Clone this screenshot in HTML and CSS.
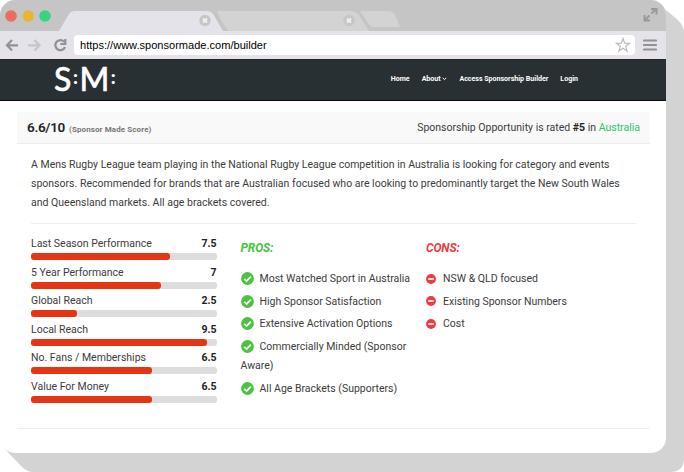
FILE: index.html
```html
<!DOCTYPE html>
<html lang="en">
<head>
<meta charset="utf-8">
<title>Sponsor Made</title>
<link rel="stylesheet" href="styles.css">
</head>
<body>
<div class="scene">
  <svg class="depth" width="684" height="472" viewBox="0 0 684 472" aria-hidden="true"><path d="M655 1L678 20Q684 26 684 33V458Q684 472 670 472H33Q27 472 22 467L3 447Z" fill="#d3d3d3"/></svg>
  <div class="window">
    <header class="tabs">
      <svg width="666" height="31" viewBox="0 0 666 31" aria-hidden="true">
        <path d="M217 11H350Q356 11 359 15L369 31H225Z" fill="#d3d3d3"/>
        <path d="M360 11H388Q393 11 395 15L400 27H374Q370 27 368 23Z" fill="#d3d3d3"/>
        <path d="M210 11Q215 11 218 15L228 31H222L207 11Z" fill="#c5c5c5"/>
        <path d="M59 31L69 14Q71 11 75 11H207Q211 11 213 14L223 31Z" fill="#e3e3e9"/>
        <circle cx="11" cy="16" r="5.8" fill="#ed6b61"/>
        <circle cx="28.300" cy="16" r="5.800" fill="#e8b634"/>
        <circle cx="45" cy="16" r="5.800" fill="#3dd183"/>
        <g fill="#c6c6c6"><circle cx="205" cy="20.500" r="5.700"/><circle cx="349" cy="20.500" r="5.700"/></g>
        <path d="M203 18.500l4 4m0-4l-4 4" stroke="#f1f1f4" stroke-width="2"/>
        <path d="M347 18.500l4 4m0-4l-4 4" stroke="#f1f1f4" stroke-width="2"/>
        <path d="M651.500 13.500l4.500-4.500M651 9h5.500v5.500M650 20.500h-5.500V15M645 20l4.500-4.500" stroke="#999" stroke-width="2" fill="none"/>
      </svg>
    </header>
    <div class="toolbar">
      <svg class="controls" width="68" height="28" viewBox="0 0 68 28" fill="none" stroke-width="2.200" aria-hidden="true">
        <path d="M18 14.300H7M12 9l-5 5.300 5 5.300" stroke="#929292"/>
        <path d="M28 14.300h11.500M34.500 9l5 5.300-5 5.300" stroke="#c6c6c6"/>
        <path d="M64 10.700A5 5 0 1 0 65 16M65.300 8v5h-5" stroke="#929292"/>
      </svg>
      <div class="address"><span>https://www.sponsormade.com/builder</span>
        <svg width="16" height="16" viewBox="0 0 16 16" aria-hidden="true"><path d="M8 1.500l1.700 4.700 4.900.1-3.900 3 1.400 4.800L8 11.300l-4.100 2.800 1.400-4.800-3.900-3 4.900-.1z" fill="none" stroke="#bbb" stroke-width="1.200"/></svg>
      </div>
      <svg width="14" height="14" viewBox="0 0 14 14" aria-hidden="true"><path d="M1 2.500h12M1 7h12M1 11.500h12" stroke="#929292" stroke-width="2.200" stroke-linecap="round"/></svg>
    </div>
    <div class="sitebar">
      <div class="logo"><b>S</b><i>:</i><b>M</b><i>:</i></div>
      <nav>
        <a>Home</a>
        <a>About <svg width="5" height="4" viewBox="0 0 5 4" aria-hidden="true"><path d="M.7.800l1.800 1.800L4.300.8" fill="none" stroke="#fff"/></svg></a>
        <a>Access Sponsorship Builder</a>
        <a>Login</a>
      </nav>
    </div>
    <main>
      <section class="scorebar">
        <div><strong class="score">6.6/10</strong><span class="note">(Sponsor Made Score)</span></div>
        <div class="rating">Sponsorship Opportunity is rated <strong>#5</strong> in <a>Australia</a></div>
      </section>
      <section class="detail">
        <p class="intro">A Mens Rugby League team playing in the National Rugby League competition in Australia is looking for category and events<br>sponsors. Recommended for brands that are Australian focused who are looking to predominantly target the New South Wales<br>and Queensland markets. All age brackets covered.</p>
        <div class="columns">
          <div class="metrics">
            <div class="metric"><span>Last Season Performance</span><b>7.5</b><div class="track"><div class="fill" style="width:75%"></div></div></div>
            <div class="metric"><span>5 Year Performance</span><b>7</b><div class="track"><div class="fill" style="width:70%"></div></div></div>
            <div class="metric"><span>Global Reach</span><b>2.5</b><div class="track"><div class="fill" style="width:25%"></div></div></div>
            <div class="metric"><span>Local Reach</span><b>9.5</b><div class="track"><div class="fill" style="width:95%"></div></div></div>
            <div class="metric"><span>No. Fans / Memberships</span><b>6.5</b><div class="track"><div class="fill" style="width:65%"></div></div></div>
            <div class="metric"><span>Value For Money</span><b>6.5</b><div class="track"><div class="fill" style="width:65%"></div></div></div>
          </div>
          <div class="pros">
            <h2>PROS:</h2>
            <ul>
              <li><svg viewBox="0 0 13 13"><use href="#check"/></svg>Most Watched Sport in Australia</li>
              <li><svg viewBox="0 0 13 13"><use href="#check"/></svg>High Sponsor Satisfaction</li>
              <li><svg viewBox="0 0 13 13"><use href="#check"/></svg>Extensive Activation Options</li>
              <li><svg viewBox="0 0 13 13"><use href="#check"/></svg>Commercially Minded (Sponsor<br>Aware)</li>
              <li><svg viewBox="0 0 13 13"><use href="#check"/></svg>All Age Brackets (Supporters)</li>
            </ul>
          </div>
          <div class="cons">
            <h2>CONS:</h2>
            <ul>
              <li><svg viewBox="0 0 10 10"><use href="#minus"/></svg>NSW &amp; QLD focused</li>
              <li><svg viewBox="0 0 10 10"><use href="#minus"/></svg>Existing Sponsor Numbers</li>
              <li><svg viewBox="0 0 10 10"><use href="#minus"/></svg>Cost</li>
            </ul>
          </div>
        </div>
      </section>
    </main>
  </div>
</div>
<svg class="symbols" aria-hidden="true">
  <symbol id="check" viewBox="0 0 13 13"><circle cx="6.500" cy="6.500" r="6.400" fill="#4bc341"/><path d="M3.200 6.800l2.400 2.300 4.300-4.400" fill="none" stroke="#fff" stroke-width="1.800"/></symbol>
  <symbol id="minus" viewBox="0 0 10 10"><circle cx="5" cy="5" r="4.900" fill="#ee3b3f"/><path d="M2.200 5h5.600" stroke="#fff" stroke-width="1.700"/></symbol>
</svg>
</body>
</html>
```
FILE: styles.css
```css
* { box-sizing: border-box; }
body { margin: 0; background: #fff; overflow: hidden; font-family: Roboto, "Liberation Sans", sans-serif; font-size: 10.5px; color: #3c3c3c; }
.scene { width: 684px; height: 472px; position: relative; }
.depth { position: absolute; inset: 0; }
.symbols { position: absolute; width: 0; height: 0; }
.window { position: relative; width: 666px; height: 453px; border-radius: 15px; background: #fff; overflow: hidden; }
.tabs { height: 31px; background: #c5c5c5; }
.tabs svg { display: block; }
.toolbar { height: 28px; background: #e3e3e9; display: flex; align-items: center; }
.controls { margin-right: 6px; }
.address { width: 561px; height: 20px; margin-right: 8px; border-radius: 4px; background: #fff; display: flex; align-items: center; justify-content: space-between; padding: 0 4px 0 6px; font: 11.05px "Liberation Sans", sans-serif; color: #000; }
.sitebar { height: 42px; background: #293033; border-top: 1px solid #202528; border-bottom: 1px solid #050a0d; display: flex; justify-content: space-between; padding: 0 88px 0 54px; }
.logo { display: flex; align-items: center; font-family: Lato, sans-serif; color: #fff; line-height: 36px; padding-bottom: 3px; }
.logo b { font-size: 32px; font-weight: 500; -webkit-text-stroke: .5px #fff; }
.logo i { font-size: 19px; font-weight: 900; font-style: normal; width: 8px; text-align: center; padding-bottom: 3px; }
nav { display: flex; align-items: center; gap: 12px; color: #fff; font-size: 7.05px; font-weight: 700; padding-bottom: 4px; }
main { padding: 11px 17px 0; }
.scorebar { height: 32px; background: #f9f9f9; border-bottom: 1px solid #ececec; display: flex; justify-content: space-between; align-items: center; padding: 0 10px; width: 633px; }
.scorebar > div:first-child { margin-top: -2px; }
.score { font-size: 13.5px; font-weight: 600; color: #222; margin-right: 4px; letter-spacing: -.3px; }
.note { font-size: 8px; font-weight: 700; color: #777; letter-spacing: .1px; }
.rating strong { color: #222; }
.rating a { color: #2fc36d; }
.detail { height: 285px; width: 633px; border-bottom: 1px solid #eee; padding: 11px 14px 0; }
.intro { margin: 0; height: 69px; border-bottom: 1px solid #eee; line-height: 19px; white-space: nowrap; letter-spacing: .005px; }
.columns { display: grid; grid-template-columns: 185.5px 161.5px 1fr; column-gap: 24px; padding-top: 13px; }
.metric { display: grid; grid-template-columns: 1fr auto; height: 28.5px; align-content: start; line-height: 14px; }
.metric b { color: #222; }
.track { grid-column: 1 / 3; height: 7px; margin-top: 2px; border-radius: 3px; background: #ddd; }
.fill { height: 7px; border-radius: 3px; background: #e43613; }
h2 { margin: 4px 0 14px; font-size: 12px; line-height: 14px; font-style: italic; font-weight: 700; letter-spacing: -.15px; }
.pros h2 { color: #4bc341; }
.cons h2 { color: #ee3b3f; }
ul { list-style: none; margin: 0; padding: 0; }
li { line-height: 19px; margin-bottom: 3.7px; white-space: nowrap; }
li svg { width: 13px; height: 13px; margin-right: 6px; vertical-align: -3px; }
.cons li svg { width: 10px; height: 10px; margin-right: 7px; vertical-align: -1.5px; }
```
